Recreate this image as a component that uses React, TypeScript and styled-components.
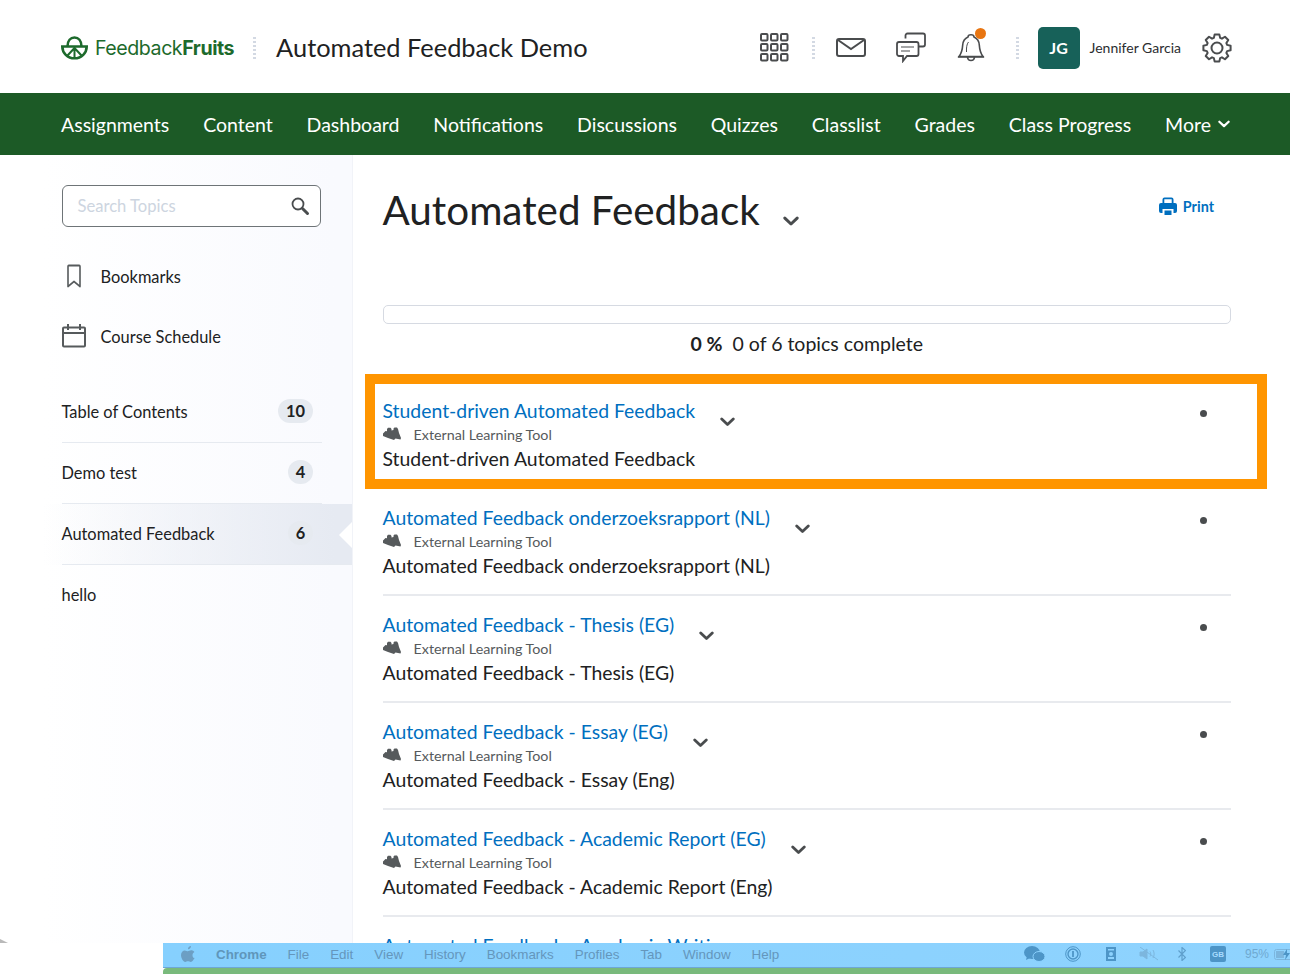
import React from "react";
import styled, { createGlobalStyle } from "styled-components";

const GlobalStyle = createGlobalStyle`
  html, body {
    margin: 0;
    padding: 0;
    background: #fff;
  }
  body {
    font-family: Lato, "Open Sans", sans-serif;
    color: #202122;
  }
`;

const Page = styled.div`
  position: relative;
  width: 1290px;
  height: 974px;
  overflow: hidden;
  background: #fff;
`;

const Header = styled.header`
  height: 93px;
  display: flex;
  align-items: center;
  padding: 2px 58px 0 61px;
  box-sizing: border-box;
`;

const Logo = styled.div`
  display: flex;
  align-items: center;
  gap: 7px;
  color: #1d6a2c;
  font-family: Inter, sans-serif;
  font-size: 19.6px;
  letter-spacing: -0.45px;
  b {
    font-weight: 700;
  }
`;

const Dots = styled.span<{ $ml: number; $mr: number }>`
  width: 3px;
  height: 24px;
  margin: 0 ${(p) => p.$mr}px 0 ${(p) => p.$ml}px;
  background-image: radial-gradient(circle, #d3d9e3 1.4px, transparent 1.5px);
  background-size: 3px 4px;
`;

const CourseTitle = styled.div`
  font-size: 25.4px;
  margin-top: -2px;
  flex: 1;
`;

const IconSlot = styled.div<{ $w: number; $mr: number }>`
  width: ${(p) => p.$w}px;
  margin-right: ${(p) => p.$mr}px;
  display: flex;
  justify-content: center;
  position: relative;
`;

const Avatar = styled.div`
  width: 42px;
  height: 42px;
  border-radius: 5px;
  background: #176159;
  color: #fff;
  font-weight: 700;
  font-size: 16px;
  display: flex;
  align-items: center;
  justify-content: center;
`;

const UserName = styled.div`
  font-size: 14px;
  margin: 0 21px 0 10px;
  color: #2b2d30;
`;

const NavBar = styled.nav`
  height: 62px;
  background: #1c5a26;
  display: flex;
  align-items: center;
  justify-content: space-between;
  padding: 0 60px 0 61px;
  box-sizing: border-box;
  color: #fff;
  font-size: 19.5px;
`;

const NavItem = styled.span`
  display: flex;
  align-items: center;
  gap: 7px;
`;

const Body = styled.div`
  display: flex;
  height: 788px;
  overflow: hidden;
`;

const Sidebar = styled.aside`
  width: 353px;
  flex: none;
  box-sizing: border-box;
  padding: 30px 0 0 61.5px;
  background: linear-gradient(90deg, #fff 12%, #f9fafe 95%);
  border-right: 1px solid #f1f3f8;
`;

const SearchBox = styled.div`
  width: 259.5px;
  height: 42px;
  box-sizing: border-box;
  border: 1px solid #6e7477;
  border-radius: 6px;
  background: #fff;
  display: flex;
  align-items: center;
  justify-content: space-between;
  padding: 0 10px 0 15px;
  font-size: 16.6px;
  color: #cdd5e0;
`;

const SideLink = styled.div<{ $mb: number }>`
  display: flex;
  align-items: center;
  font-size: 16.4px;
  height: 30px;
  margin-bottom: ${(p) => p.$mb}px;
  svg {
    width: 24px;
    margin-right: 15px;
  }
`;

const LinkList = styled.div`
  margin-top: 34px;
`;

const ModuleList = styled.div`
  margin-top: 31px;
  margin-left: -61.5px;
`;

const ModuleRow = styled.div<{ $active?: boolean; $last?: boolean }>`
  position: relative;
  height: 61px;
  box-sizing: border-box;
  padding: 0 39px 2px 61.5px;
  display: flex;
  align-items: center;
  justify-content: space-between;
  font-size: 16.4px;
  background: ${(p) =>
    p.$active ? "linear-gradient(90deg, #ffffff00 12%, #e6eaf2 95%)" : "transparent"};
  &::after {
    content: "";
    display: ${(p) => (p.$last ? "none" : "block")};
    position: absolute;
    left: 61.5px;
    right: ${(p) => (p.$active ? 0 : 30)}px;
    bottom: 0;
    height: 1px;
    background: #e6eaf0;
  }
`;

const Notch = styled.span`
  position: absolute;
  right: 0;
  top: 18px;
  width: 0;
  height: 0;
  border-style: solid;
  border-width: 13px 13px 13px 0;
  border-color: transparent #fff transparent transparent;
`;

const CountBadge = styled.span<{ $wide?: boolean }>`
  min-width: ${(p) => (p.$wide ? 35 : 25)}px;
  height: 24px;
  border-radius: 12px;
  background: #e6eaf0;
  font-weight: 700;
  font-size: 16.4px;
  display: flex;
  align-items: center;
  justify-content: center;
  margin-top: -2px;
`;

const Main = styled.main`
  flex: 1;
  padding: 0 59px 0 29.5px;
`;

const TitleRow = styled.div`
  display: flex;
  align-items: center;
  height: 110px;
  margin-bottom: 40px;
`;

const PageTitle = styled.h1`
  margin: 0;
  font-weight: 400;
  font-size: 40.4px;
  line-height: 50px;
  flex: none;
`;

const TitleChevron = styled.span`
  display: flex;
  margin: 22px 0 0 23px;
  flex: 1;
`;

const PrintLink = styled.span`
  display: flex;
  align-items: center;
  gap: 6px;
  margin: -8px 17px 0 0;
  color: #006fbf;
  font-size: 14.4px;
  font-weight: 700;
`;

const ProgressTrack = styled.div`
  height: 19px;
  box-sizing: border-box;
  border: 1px solid #d6dae2;
  border-radius: 5px;
`;

const ProgressText = styled.div`
  display: flex;
  justify-content: center;
  gap: 10px;
  font-size: 19.5px;
  line-height: 24px;
  margin: 8px 0 25px 0;
  b {
    font-weight: 700;
  }
`;

const Topic = styled.div<{ $highlight?: boolean }>`
  position: relative;
  height: 107px;
  box-sizing: border-box;
  padding-top: ${(p) => (p.$highlight ? 18 : 17)}px;
  margin-bottom: ${(p) => (p.$highlight ? 1 : 0)}px;
  border-bottom: ${(p) => (p.$highlight ? "none" : "2px solid #e8eaee")};
  ${(p) =>
    p.$highlight &&
    `
    &::after {
      content: "";
      position: absolute;
      inset: -7px -35.5px -1px -17.5px;
      border: 10px solid #ff9500;
    }
  `}
`;

const TopicHead = styled.div`
  display: flex;
  align-items: center;
  height: 24px;
`;

const TopicLink = styled.span`
  color: #006fbf;
  font-size: 19.4px;
  line-height: 24px;
`;

const TopicChevron = styled.span`
  display: flex;
  margin: 22px 0 0 25px;
`;

const Dot = styled.span`
  width: 7px;
  height: 7px;
  border-radius: 50%;
  background: #494c4e;
  margin: 5px 24px 0 auto;
`;

const TopicType = styled.div`
  display: flex;
  align-items: center;
  gap: 13px;
  height: 24px;
  padding-bottom: 2px;
  box-sizing: border-box;
  font-size: 14.3px;
  color: #565a5c;
`;

const TopicDesc = styled.div`
  font-size: 19.4px;
  line-height: 24px;
`;

const MenuBar = styled.div`
  margin-left: 163px;
  height: 31px;
  overflow: hidden;
`;

const MenuStrip = styled.div`
  height: 25px;
  display: flex;
  align-items: center;
  background: linear-gradient(90deg, #86d0fe, #8fd3fe);
  border-bottom: 1px solid #6ea7d6;
  padding: 0 0 2px 18px;
  box-sizing: border-box;
  font-family: "Liberation Sans", sans-serif;
  font-size: 13.4px;
  color: #6496bc;
`;

const MenuItem = styled.span<{ $strong?: boolean }>`
  display: flex;
  margin-right: 21px;
  font-weight: ${(p) => (p.$strong ? 700 : 400)};
  color: ${(p) => (p.$strong ? "#5f96bb" : "#6496bc")};
`;

const MenuIcons = styled.div`
  margin-left: auto;
  display: flex;
  align-items: center;
  color: #4d95c7;
`;

const TrayItem = styled.span<{ $ml: number; $mr?: number }>`
  display: flex;
  margin-left: ${(p) => p.$ml}px;
  margin-right: ${(p) => p.$mr ?? 0}px;
`;

const MenuLabel = styled.span`
  font-size: 12px;
  color: #6fa9d1;
`;

const Desktop = styled.div`
  height: 6px;
  background: #79ba7c;
  border-radius: 4px 0 0 0;
`;

const CornerMark = styled.span`
  position: absolute;
  left: 0;
  top: 939px;
  width: 0;
  height: 0;
  border-style: solid;
  border-width: 4px 0 0 8px;
  border-color: transparent transparent transparent #b9b9b9;
`;

const NotifyDot = styled.span`
  position: absolute;
  top: -4px;
  left: 18px;
  width: 11px;
  height: 11px;
  border-radius: 50%;
  background: #e87511;
`;

const InputFlag = styled.span`
  width: 16px;
  height: 16px;
  border-radius: 2px;
  background: #4d95c7;
  color: #a8dcff;
  font-size: 8px;
  font-weight: 700;
  display: flex;
  align-items: center;
  justify-content: center;
`;

const Chevron = ({ size = 14 }: { size?: number }) => (
  <svg width={size} height={size * 0.65} viewBox="0 0 14 9" fill="none">
    <path d="M1.6 1.8 7 7l5.4-5.2" stroke="#494c4e" strokeWidth="2.6" strokeLinecap="round" strokeLinejoin="round" />
  </svg>
);

const LogoMark = () => (
  <svg width="27" height="24" viewBox="0 0 27 24" fill="none" stroke="#1d6a2c" strokeWidth="2.6">
    <path d="M6.500 10.500C6.500 4.500 9.600 1.500 13.500 1.500s7 3 7 9" />
    <path d="M1.300 10.500h24.400c0 6.400-5.200 11.800-12.200 11.800S1.300 16.900 1.300 10.500Z" />
    <path d="M13.500 11v10M13.500 12l-7 7.500M13.500 12l7 7.500" strokeWidth="2" />
  </svg>
);

const GridIcon = () => (
  <svg width="30" height="30" viewBox="0 0 30 30" fill="none" stroke="#4a4c4e" strokeWidth="2">
    {[1, 11, 21].flatMap((y) =>
      [2, 12, 22].map((x) => <rect key={`${x}-${y}`} x={x} y={y} width="6.500" height="6.500" rx="1" />)
    )}
  </svg>
);

const MailIcon = () => (
  <svg width="30" height="20" viewBox="0 0 30 20" fill="none" stroke="#4a4c4e" strokeWidth="2">
    <rect x="1" y="1" width="28" height="17" rx="2" />
    <path d="m2 2 13 9 13-9" />
  </svg>
);

const ChatIcon = () => (
  <svg width="31" height="31" viewBox="0 0 31 31" fill="none" stroke="#4a4c4e" strokeWidth="1.800">
    <path d="M9.500 6.500V3.500a2 2 0 0 1 2-2h15.500a2 2 0 0 1 2 2v9a2 2 0 0 1-2 2H23" />
    <path d="M3 10h17.500a2 2 0 0 1 2 2v10a2 2 0 0 1-2 2H11l-4 5v-5H3a2 2 0 0 1-2-2V12a2 2 0 0 1 2-2Z" />
    <path d="M5 15h13M5 19h9" strokeWidth="1.200" />
  </svg>
);

const BellIcon = () => (
  <svg width="28" height="31" viewBox="0 0 28 31" fill="none" stroke="#4a4c4e" strokeWidth="1.600">
    <path d="M11 5c-3.500 1.500-5 4-5.300 8-.3 5-1 8-3.700 11.500h24C23.300 21 22.600 18 22.300 13c-.3-4-1.800-6.500-5.300-8 0-3-6-3-6 0Z" />
    <path d="M1 25h26M10.500 25.500c.5 4 6.500 4 7 0" />
    <path d="M9.500 20c-.2-4 .2-8 2-10" strokeWidth="1" />
  </svg>
);

// eight toothed outline for the settings cog
const gearPath = (() => {
  const pts: string[] = [];
  for (let i = 0; i < 8; i++) {
    const a = (i * Math.PI) / 4 - Math.PI / 2;
    const at = (r: number, d: number) =>
      `${(15 + r * Math.cos(a + d)).toFixed(2)} ${(15 + r * Math.sin(a + d)).toFixed(2)}`;
    pts.push(at(10.6, -0.3), at(13.8, -0.17), at(13.8, 0.17), at(10.6, 0.3));
  }
  return `M${pts.join("L")}Z`;
})();

const GearIcon = () => (
  <svg width="30" height="30" viewBox="0 0 30 30" fill="none" stroke="#4a4c4e" strokeWidth="2" strokeLinejoin="round">
    <path d={gearPath} />
    <circle cx="15" cy="15" r="5.500" />
  </svg>
);

const SearchIcon = () => (
  <svg width="20" height="20" viewBox="0 0 20 20" fill="none" stroke="#494c4e">
    <circle cx="8" cy="8" r="5.500" strokeWidth="1.800" />
    <path d="m12.500 12.500 5 5" strokeWidth="3" strokeLinecap="round" />
  </svg>
);

const BookmarkIcon = () => (
  <svg width="24" height="24" viewBox="0 0 24 24" fill="none" stroke="#565a5c" strokeWidth="2" strokeLinejoin="round">
    <path d="M5.500 1.500h13a1 1 0 0 1 1 1v20L12 17.500l-7.500 5v-20a1 1 0 0 1 1-1Z" transform="translate(2.400 0) scale(.8 1)" />
  </svg>
);

const CalendarIcon = () => (
  <svg width="24" height="24" viewBox="0 0 24 24" fill="none" stroke="#565a5c" strokeWidth="2">
    <rect x="1" y="3.500" width="22" height="19" rx="1" />
    <path d="M1 9h22M6 0v6M18 0v6" />
  </svg>
);

const PrinterIcon = () => (
  <svg width="18" height="18" viewBox="0 0 18 18" fill="#006fbf">
    <path d="M3.500 7V2.500A2 2 0 0 1 5.500.5h7a2 2 0 0 1 2 2V7h-1.800V2.300H5.300V7Z" />
    <path d="M2 6h14a2 2 0 0 1 2 2v6a2 2 0 0 1-2 2h-1.500v-4h-11v4H2a2 2 0 0 1-2-2V8a2 2 0 0 1 2-2Z" />
    <path d="M5.500 13.500h7V18h-7z" />
  </svg>
);

const ToolIcon = () => (
  <svg width="18" height="14" viewBox="0 0 18 14" fill="#565a5c">
    <path d="M0 6.500 2.500 4 4 4.200V2L5 .8h2.500L8.500 2v1.500L10.500 3V1.500L11.500.5H14l1 1.500 1 4 2 5-.5 1.500-5-1-1.500 1.500-6-2-5-2Z" />
  </svg>
);

const AppleGlyph = () => (
  <svg width="14" height="16" viewBox="0 0 14 16" fill="#6c9fc4">
    <path d="M10 0c.1 1.700-1.400 3.300-3 3.200C6.800 1.600 8.400.1 10 0Zm3.600 11.500c-.7 1.800-2.300 4.500-3.800 4.500-1.100 0-1.500-.7-2.800-.7s-1.800.7-2.800.7C2.300 16 0 12.300 0 9.100c0-3 1.900-4.700 3.800-4.700 1.200 0 2.200.8 3 .8s1.900-.9 3.300-.9c.6 0 2.300.2 3.300 1.800-2.800 1.700-2.300 5.400.2 6.400Z" />
  </svg>
);

const WeChatIcon = () => (
  <svg width="21" height="16" viewBox="0 0 21 16" fill="#4d95c7">
    <ellipse cx="8" cy="6.500" rx="8" ry="6.500" />
    <path d="m3 10-1 4 4-2Z" />
    <ellipse cx="15" cy="10.500" rx="6" ry="5" stroke="#8bd1fe" />
  </svg>
);

const OnePassIcon = () => (
  <svg width="16" height="16" viewBox="0 0 16 16" fill="none" stroke="#4d95c7">
    <circle cx="8" cy="8" r="7.300" />
    <circle cx="8" cy="8" r="5" strokeWidth="1.400" />
    <path d="M8 5v6" strokeWidth="1.800" />
  </svg>
);

const BadgeIcon = () => (
  <svg width="10" height="14" viewBox="0 0 10 14" fill="#4d95c7">
    <path d="M0 0h10v14H0Zm2 2v1.500h6V2Zm3 3a2 2 0 1 0 0 4 2 2 0 0 0 0-4ZM2 10v2h6v-2Z" fillRule="evenodd" />
  </svg>
);

const MuteIcon = () => (
  <svg width="19" height="14" viewBox="0 0 19 14" fill="none" stroke="#7cb6de">
    <path d="M1 5v4h3l4 3V2L4 5Z" fill="#7cb6de" />
    <path d="M11 4.500c1 1.500 1 3.500 0 5M14 3c1.500 2.500 1.500 5.500 0 8M1 0l18 13" />
  </svg>
);

const BluetoothIcon = () => (
  <svg width="8" height="14" viewBox="0 0 8 14" fill="none" stroke="#5f9fcc" strokeWidth="1.200">
    <path d="m.5 3.500 7 7L4 13.500V.5l3.500 3-7 7" />
  </svg>
);

const BatteryIcon = () => (
  <svg width="22" height="11" viewBox="0 0 22 11" fill="none">
    <rect x=".5" y=".5" width="20" height="10" rx="2" stroke="#7cb6de" />
    <path d="M2 2h8v7H2z" fill="#7cb6de" />
    <path d="m13 0-4 6h3l-1 5 5-7h-3Z" fill="#4d95c7" />
  </svg>
);

const navLinks = [
  "Assignments",
  "Content",
  "Dashboard",
  "Notifications",
  "Discussions",
  "Quizzes",
  "Classlist",
  "Grades",
  "Class Progress",
];

// the last topic is cut off by the window edge, only its title shows
const topics = [
  { link: "Student-driven Automated Feedback", desc: "Student-driven Automated Feedback" },
  { link: "Automated Feedback onderzoeksrapport (NL)", desc: "Automated Feedback onderzoeksrapport (NL)" },
  { link: "Automated Feedback - Thesis (EG)", desc: "Automated Feedback - Thesis (EG)" },
  { link: "Automated Feedback - Essay (EG)", desc: "Automated Feedback - Essay (Eng)" },
  { link: "Automated Feedback - Academic Report (EG)", desc: "Automated Feedback - Academic Report (Eng)" },
  { link: "Automated Feedback - Academic Writing", desc: "" },
];

const menuItems = ["File", "Edit", "View", "History", "Bookmarks", "Profiles", "Tab", "Window", "Help"];

export default function App() {
  return (
    <Page>
      <GlobalStyle />
      <Header>
        <Logo>
          <LogoMark />
          <span>
            Feedback<b>Fruits</b>
          </span>
        </Logo>
        <Dots $ml={19} $mr={20} />
        <CourseTitle>Automated Feedback Demo</CourseTitle>
        <IconSlot $w={30} $mr={23}>
          <GridIcon />
        </IconSlot>
        <Dots $ml={0} $mr={21} />
        <IconSlot $w={30} $mr={30}>
          <MailIcon />
        </IconSlot>
        <IconSlot $w={31} $mr={30}>
          <ChatIcon />
        </IconSlot>
        <IconSlot $w={28} $mr={31}>
          <BellIcon />
          <NotifyDot />
        </IconSlot>
        <Dots $ml={0} $mr={19} />
        <Avatar>JG</Avatar>
        <UserName>Jennifer Garcia</UserName>
        <IconSlot $w={30} $mr={0}>
          <GearIcon />
        </IconSlot>
      </Header>

      <NavBar>
        {navLinks.map((item) => (
          <NavItem key={item}>{item}</NavItem>
        ))}
        <NavItem>
          More
          <svg width="12" height="8" viewBox="0 0 14 9" fill="none">
            <path d="M1.600 1.800 7 7l5.400-5.200" stroke="#fff" strokeWidth="2.600" strokeLinecap="round" strokeLinejoin="round" />
          </svg>
        </NavItem>
      </NavBar>

      <Body>
        <Sidebar>
          <SearchBox>
            Search Topics
            <SearchIcon />
          </SearchBox>
          <LinkList>
            <SideLink $mb={30}>
              <BookmarkIcon />
              Bookmarks
            </SideLink>
            <SideLink $mb={0}>
              <CalendarIcon />
              Course Schedule
            </SideLink>
          </LinkList>
          <ModuleList>
            <ModuleRow>
              Table of Contents
              <CountBadge $wide>10</CountBadge>
            </ModuleRow>
            <ModuleRow>
              Demo test
              <CountBadge>4</CountBadge>
            </ModuleRow>
            <ModuleRow $active>
              Automated Feedback
              <CountBadge>6</CountBadge>
              <Notch />
            </ModuleRow>
            <ModuleRow $last>hello</ModuleRow>
          </ModuleList>
        </Sidebar>

        <Main>
          <TitleRow>
            <PageTitle>Automated Feedback</PageTitle>
            <TitleChevron>
              <Chevron size={16} />
            </TitleChevron>
            <PrintLink>
              <PrinterIcon />
              Print
            </PrintLink>
          </TitleRow>
          <ProgressTrack />
          <ProgressText>
            <b>0 %</b>
            <span>0 of 6 topics complete</span>
          </ProgressText>
          {topics.map((topic, i) => (
            <Topic key={topic.link} $highlight={i === 0}>
              <TopicHead>
                <TopicLink>{topic.link}</TopicLink>
                {topic.desc && (
                  <>
                    <TopicChevron>
                      <Chevron size={15} />
                    </TopicChevron>
                    <Dot />
                  </>
                )}
              </TopicHead>
              {topic.desc && (
                <>
                  <TopicType>
                    <ToolIcon />
                    External Learning Tool
                  </TopicType>
                  <TopicDesc>{topic.desc}</TopicDesc>
                </>
              )}
            </Topic>
          ))}
        </Main>
      </Body>

      <CornerMark />
      <MenuBar>
        <MenuStrip>
          <MenuItem>
            <AppleGlyph />
          </MenuItem>
          <MenuItem $strong>Chrome</MenuItem>
          {menuItems.map((item) => (
            <MenuItem key={item}>{item}</MenuItem>
          ))}
          <MenuIcons>
            <TrayItem $ml={0}>
              <WeChatIcon />
            </TrayItem>
            <TrayItem $ml={20}>
              <OnePassIcon />
            </TrayItem>
            <TrayItem $ml={25}>
              <BadgeIcon />
            </TrayItem>
            <TrayItem $ml={23}>
              <MuteIcon />
            </TrayItem>
            <TrayItem $ml={20}>
              <BluetoothIcon />
            </TrayItem>
            <TrayItem $ml={24}>
              <InputFlag>GB</InputFlag>
            </TrayItem>
            <TrayItem $ml={19}>
              <MenuLabel>95%</MenuLabel>
            </TrayItem>
            <TrayItem $ml={5} $mr={-6}>
              <BatteryIcon />
            </TrayItem>
          </MenuIcons>
        </MenuStrip>
        <Desktop />
      </MenuBar>
    </Page>
  );
}
